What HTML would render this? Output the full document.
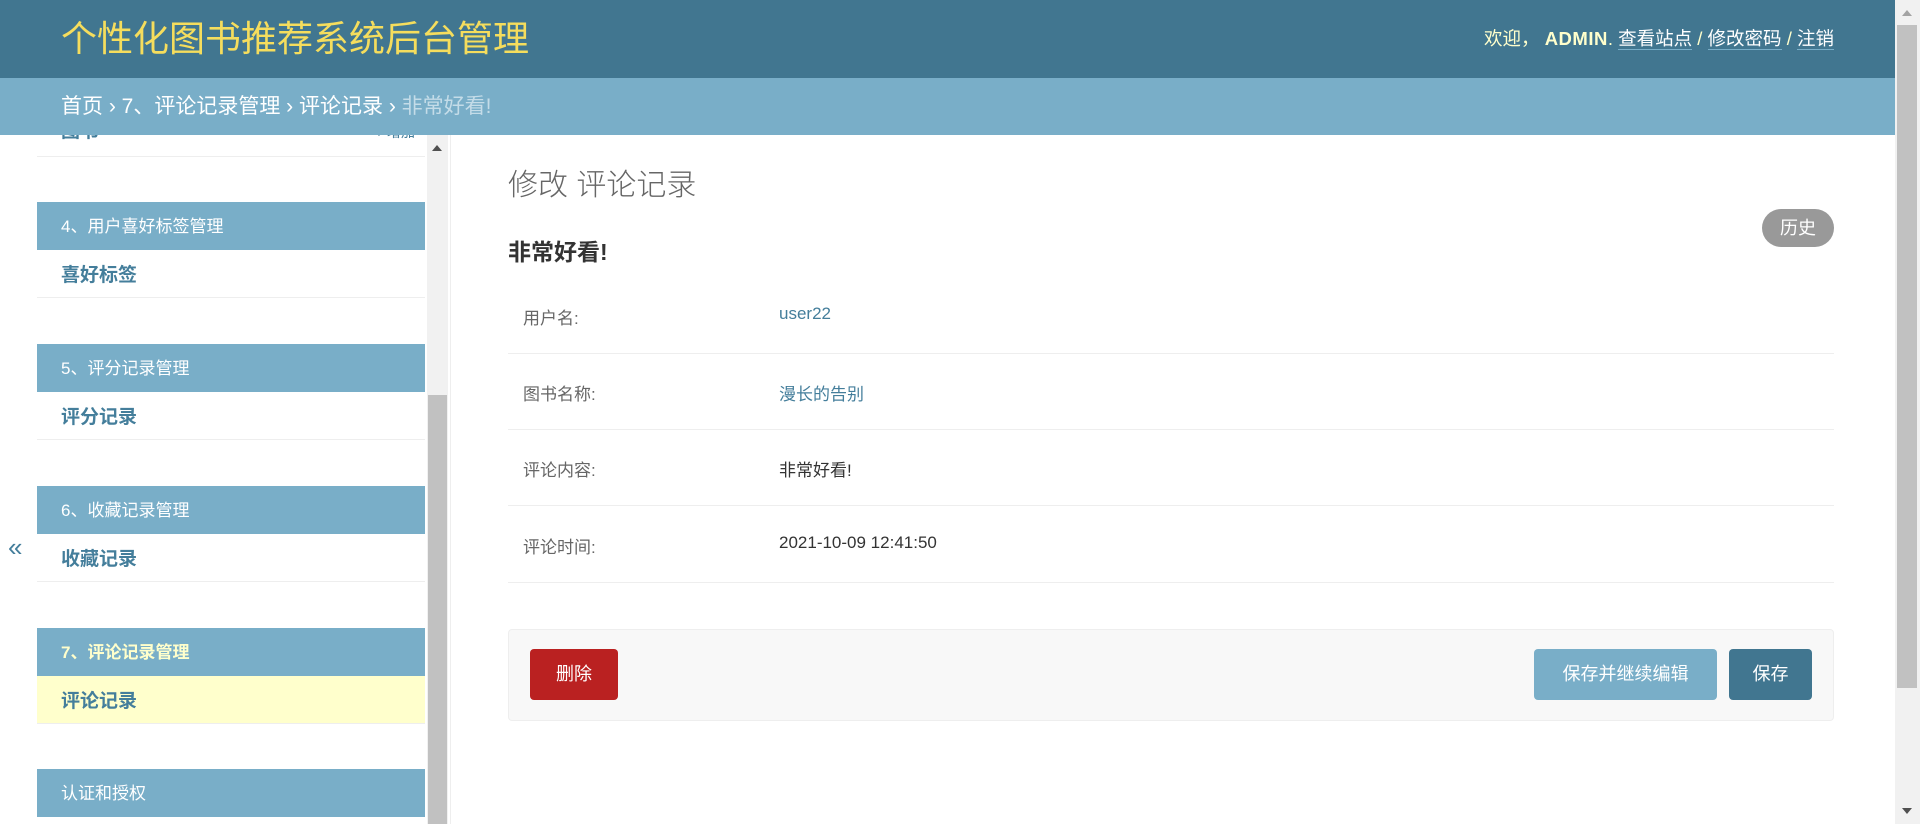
<!DOCTYPE html>
<html><head><meta charset="utf-8"><style>
*{margin:0;padding:0;box-sizing:border-box}
body{width:1920px;height:824px;overflow:hidden;background:#fff;font-family:"Liberation Sans","Noto Sans CJK SC",sans-serif;position:relative}
.hdr{position:absolute;left:0;top:0;width:1895px;height:78px;background:#417690}
.title{position:absolute;left:61px;top:18px;font-size:36px;color:#f5dd5d;line-height:42px}
.tools{position:absolute;right:61px;top:27px;font-size:18.5px;color:#ffc;line-height:24px}
.tools b{color:#ffc;letter-spacing:.5px}
.tools u{text-decoration:none;color:#fff;border-bottom:1px solid #79aec8}
.bc{position:absolute;left:0;top:78px;width:1895px;height:57px;background:#79aec8;color:#fff;font-size:21px;line-height:57px;padding-left:61px}
.bc span{color:#c4dce8}
.side{position:absolute;left:37px;top:135px;width:388px;height:689px;overflow:hidden}
.sh{position:absolute;left:0;width:388px;height:48px;background:#79aec8;color:#fff;font-size:17px;line-height:50px;padding-left:24px}
.si{position:absolute;left:0;width:388px;height:48px;border-bottom:1px solid #eee;color:#447e9b;font-weight:bold;font-size:19px;line-height:52px;padding-left:24px}
.sb{position:absolute;left:427px;top:135px;width:21px;height:689px;background:#f1f1f1}
.sb .th{position:absolute;left:1px;top:260px;width:19px;height:429px;background:#c1c1c1}
.sep{position:absolute;left:450px;top:135px;width:1px;height:689px;background:#eee}
.pg{position:absolute;left:1895px;top:0;width:25px;height:824px;background:#f1f1f1}
.pg .th{position:absolute;left:2px;top:25px;width:20px;height:663px;background:#c1c1c1}
.h1{position:absolute;left:508px;top:167px;font-size:30px;color:#666;font-weight:300;line-height:38px}
.h2{position:absolute;left:508px;top:237px;font-size:23px;color:#333;font-weight:bold;line-height:30px}
.hist{position:absolute;left:1762px;top:209px;width:72px;height:38px;border-radius:19px;background:#999;color:#fff;font-size:18px;line-height:38px;text-align:center}
.row{position:absolute;left:508px;width:1326px;height:76px;border-bottom:1px solid #eee}
.row .l{position:absolute;left:15px;top:26px;font-size:17px;color:#666}
.row .v{position:absolute;left:271px;top:26px;font-size:17px;color:#333}
.row .v.a{color:#447e9b}
.sub{position:absolute;left:508px;top:629px;width:1326px;height:92px;background:#f8f8f8;border:1px solid #eee;border-radius:4px}
.btn{position:absolute;height:51px;border-radius:4px;color:#fff;font-size:18px;line-height:51px;text-align:center}
</style></head><body>
<div class="hdr"><div class="title">个性化图书推荐系统后台管理</div>
<div class="tools">欢迎， <b>ADMIN</b>. <u>查看站点</u> / <u>修改密码</u> / <u>注销</u></div></div>
<div class="bc">首页 › 7、评论记录管理 › 评论记录 › <span>非常好看!</span></div>
<div style="position:absolute;left:8px;top:532px;font-size:26px;color:#447e9b">«</div>
<div class="side">
<div class="si" style="top:-26px;height:48px;line-height:46px">图书<span style="position:absolute;right:10px;font-size:14px;font-weight:normal">+ 增加</span></div>
<div class="sh" style="top:67px">4、用户喜好标签管理</div>
<div class="si" style="top:115px">喜好标签</div>
<div class="sh" style="top:209px">5、评分记录管理</div>
<div class="si" style="top:257px">评分记录</div>
<div class="sh" style="top:351px">6、收藏记录管理</div>
<div class="si" style="top:399px">收藏记录</div>
<div class="sh" style="top:493px;color:#ffc;font-weight:bold">7、评论记录管理</div>
<div class="si" style="top:541px;background:#ffc">评论记录</div>
<div class="sh" style="top:634px">认证和授权</div>
</div>
<div class="sb"><div style="position:absolute;left:5px;top:10px;width:0;height:0;border-left:5px solid transparent;border-right:5px solid transparent;border-bottom:6px solid #505050"></div><div class="th"></div></div>
<div class="sep"></div>
<div class="h1">修改 评论记录</div>
<div class="h2">非常好看!</div>
<div class="hist">历史</div>
<div class="row" style="top:278px"><div class="l">用户名:</div><div class="v a">user22</div></div>
<div class="row" style="top:354px"><div class="l">图书名称:</div><div class="v a">漫长的告别</div></div>
<div class="row" style="top:430px"><div class="l">评论内容:</div><div class="v">非常好看!</div></div>
<div class="row" style="top:507px"><div class="l">评论时间:</div><div class="v">2021-10-09 12:41:50</div></div>
<div class="sub"></div>
<div class="btn" style="left:530px;top:649px;width:88px;background:#ba2121">删除</div>
<div class="btn" style="left:1534px;top:649px;width:183px;background:#79aec8">保存并继续编辑</div>
<div class="btn" style="left:1729px;top:649px;width:83px;background:#417690">保存</div>
<div class="pg"><div style="position:absolute;left:7px;top:10px;width:0;height:0;border-left:5px solid transparent;border-right:5px solid transparent;border-bottom:6px solid #a3a3a3"></div><div class="th"></div><div style="position:absolute;left:7px;top:808px;width:0;height:0;border-left:5px solid transparent;border-right:5px solid transparent;border-top:6px solid #505050"></div></div>
</body></html>
